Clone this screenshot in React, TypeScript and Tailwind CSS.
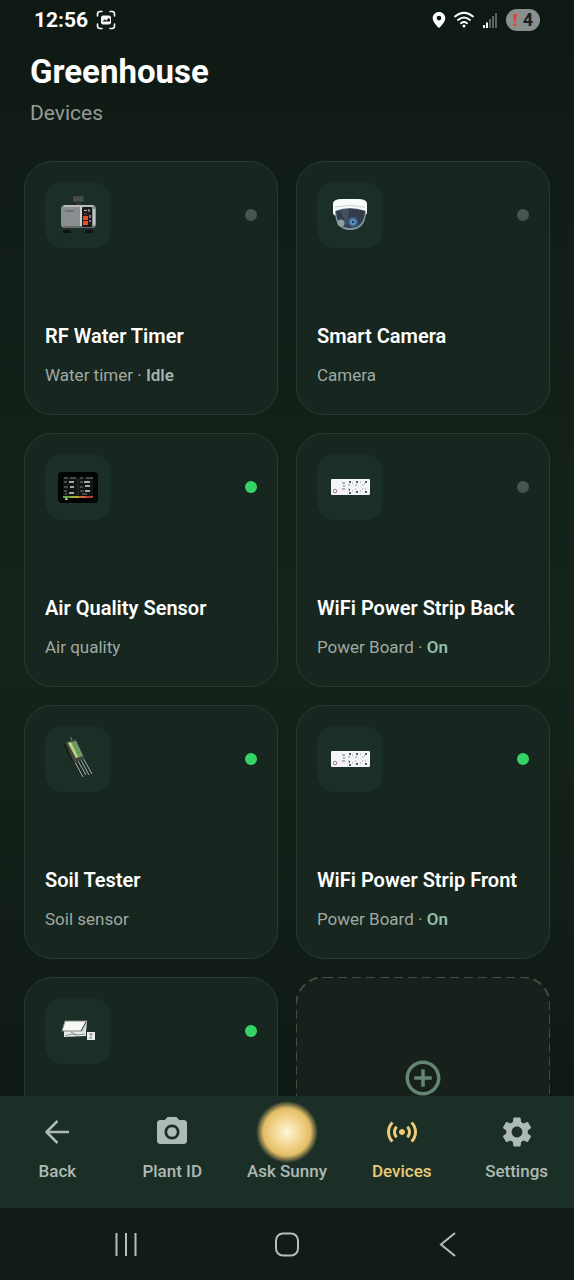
import { FC, ReactNode } from 'react';
import { MdAddCircleOutline, MdCameraAlt, MdSensors, MdSettings } from 'react-icons/md';

interface Device {
  id: string;
  name?: string;
  kind?: string;
  state?: 'Idle' | 'On';
  online: boolean;
  picture: ReactNode;
}

const WaterTimer = () => (
  <svg width="44" height="44" viewBox="0 0 44 44" aria-hidden="true">
    <rect x="17" y="3" width="11" height="6" rx="1" fill="#3f4343" />
    <path d="M19 4v4M22 4v4M25 4v4" stroke="#5b605f" strokeWidth="1" />
    <rect x="20" y="8" width="5" height="5" fill="#2f3434" />
    <rect x="8" y="34" width="6" height="5" fill="#252929" />
    <rect x="7" y="37" width="8" height="3" rx="1" fill="#0d1010" />
    <rect x="30" y="34" width="6" height="5" fill="#252929" />
    <rect x="29" y="37" width="8" height="3" rx="1" fill="#0d1010" />
    <rect x="5" y="12" width="35" height="23" rx="4" fill="#898e91" />
    <path d="M8 13h29" stroke="#b9bdbd" strokeWidth="2" />
    <path d="M7 34h31" stroke="#656a6c" strokeWidth="2" />
    <path d="M9 18h9" stroke="#6d7275" strokeWidth="2" />
    <rect x="24" y="14" width="3" height="19" fill="#cfd1d1" />
    <rect x="26" y="14" width="10" height="20" rx="1" fill="#17191b" />
    <path d="M28 17l1 1 2-1M33 16v3" stroke="#d6d6d6" strokeWidth="1" fill="none" />
    <rect x="27" y="23" width="5" height="4" fill="#f04a21" />
    <rect x="27" y="28" width="5" height="4" fill="#f04a21" />
    <path d="M28 21h3" stroke="#b3432a" strokeWidth="1" />
    <path d="M34 22v3M34 27v2" stroke="#ddd" strokeWidth="1" />
    <path d="M38 16v16" stroke="#bec2c3" strokeWidth="2" />
  </svg>
);

const DomeCamera = () => (
  <svg width="44" height="44" viewBox="0 0 44 44" aria-hidden="true">
    <path d="M5 10Q6 6 14 6H30Q38 6 39 10V20Q38 23 36 23H8Q5 22 5 20Z" fill="#fafcfc" />
    <path d="M7 14Q22 11 37 14" stroke="#c8d0d3" strokeWidth="1" fill="none" />
    <path d="M7 18Q22 12 38 18Q38 37 22 37Q7 37 7 18Z" fill="#8295aa" />
    <path d="M8 18Q22 13 37 18Q36 35 22 35Q9 35 8 18Z" fill="#333d49" />
    <path d="M12 17Q16 15 21 16L19 33Q15 31 16 26Z" fill="#445060" />
    <circle cx="13" cy="30" r="3.5" fill="#8f9da7" />
    <circle cx="25" cy="29" r="5" fill="#3d638b" />
    <circle cx="25" cy="29" r="3" fill="#6096c6" />
    <circle cx="25" cy="29" r="1.3" fill="#1e3a5c" />
  </svg>
);

const AirMonitor = () => (
  <svg width="44" height="44" viewBox="0 0 44 44" aria-hidden="true">
    <rect x="2" y="7" width="40" height="31" rx="4" fill="#020303" />
    <rect x="7" y="12" width="30" height="21" fill="#111414" />
    <path
      d="M8 13h4M14 13h6M24 13h3M30 13h7M8 17h3M24 17h3M8 22h4M24 22h3M8 26h3M24 26h4M9 29h2M26 29h5"
      stroke="#7a8080"
      strokeWidth="1"
    />
    <path d="M13 17h5M28 17h6M14 22h4M29 21h5M13 28h5M29 26h5" stroke="#d3d7d6" strokeWidth="1.5" />
    <path d="M22 14v16" stroke="#303536" strokeWidth="1" />
    <path d="M7 32h8" stroke="#65a53f" strokeWidth="2" />
    <path d="M15 32h8" stroke="#b3ab36" strokeWidth="2" />
    <path d="M23 32h7" stroke="#cf6b32" strokeWidth="2" />
    <path d="M30 32h7" stroke="#b83835" strokeWidth="2" />
    <path d="M10 32l2 3h-3z" fill="#d6e3a0" />
  </svg>
);

const PowerStrip = () => (
  <svg width="44" height="44" viewBox="0 0 44 44" aria-hidden="true">
    <rect x="3" y="14" width="39" height="16" rx="1" fill="#f2f4f7" />
    <circle cx="7" cy="26" r="1.8" fill="none" stroke="#a97a80" strokeWidth="1" />
    <path d="M14 18h3M15 21h2M14 24h3" stroke="#73787c" strokeWidth="1" />
    <path
      d="M20 20h2M24 18h1M27 20h2M32 17h1M34 20h1M36 19h1M20 24h1M24 26h1M27 24h1M32 26h1M34 24h1M37 24h1"
      stroke="#8b9195"
      strokeWidth="1"
    />
    <path d="M21 17h2M28 17h2M37 17h2M21 25h1M21 28h2M28 27h2M37 27h2" stroke="#25292c" strokeWidth="1.5" />
  </svg>
);

const SoilProbe = () => (
  <svg width="44" height="44" viewBox="0 0 44 44" aria-hidden="true">
    <path d="M19 25l8 15M22 24l8 14M25 23l8 15M27 21l9 16" stroke="#aaafaa" strokeWidth="1" />
    <path d="M15 0l1 4" stroke="#777c72" strokeWidth="1" />
    <path d="M9 5L20 2L29 22L18 26Z" fill="#41473f" />
    <path d="M9 5L18 26L16 25L8 9Z" fill="#191e1a" />
    <path d="M12 6L20 4L27 19L20 21Z" fill="#7b9960" />
    <path d="M12 6L15 5L22 20L20 21Z" fill="#bfd080" />
    <path d="M17 7h2M18 10l3-1M20 13l2-1M21 16l3-1" stroke="#4ba266" strokeWidth="2" />
  </svg>
);

const Sender = () => (
  <svg width="44" height="44" viewBox="0 0 44 44" aria-hidden="true">
    <path d="M8 20H30V27L8 28Z" fill="#e5e8e4" />
    <path d="M9 12H31L26 22H6Z" fill="#f7f8f4" stroke="#7d8580" strokeWidth="1" />
    <path d="M31 12L26 22L30 24Z" fill="#d7dcd8" />
    <path d="M30 13L25 22" stroke="#39413c" strokeWidth="1" />
    <path d="M9 27l7-2 5 1M15 23l5 3 9-1" stroke="#8c938e" strokeWidth="1" fill="none" />
    <rect x="31" y="23" width="8" height="8" fill="#e9ece8" />
    <path d="M33 25h4M35 25v4M33 29h3" stroke="#89918c" strokeWidth="1" />
  </svg>
);

const BackArrow = () => (
  <svg width="36" height="36" viewBox="0 0 36 36" fill="none" stroke="currentColor" strokeWidth="2.5" aria-hidden="true">
    <path d="M30 18H7M18.500 7L7.500 18L18.500 29" strokeLinejoin="round" />
  </svg>
);

const devices: Device[] = [
  { id: 'timer', name: 'RF Water Timer', kind: 'Water timer', state: 'Idle', online: false, picture: <WaterTimer /> },
  { id: 'camera', name: 'Smart Camera', kind: 'Camera', online: false, picture: <DomeCamera /> },
  { id: 'air', name: 'Air Quality Sensor', kind: 'Air quality', online: true, picture: <AirMonitor /> },
  { id: 'strip-back', name: 'WiFi Power Strip Back', kind: 'Power Board', state: 'On', online: false, picture: <PowerStrip /> },
  { id: 'soil', name: 'Soil Tester', kind: 'Soil sensor', online: true, picture: <SoilProbe /> },
  { id: 'strip-front', name: 'WiFi Power Strip Front', kind: 'Power Board', state: 'On', online: true, picture: <PowerStrip /> },
  { id: 'sender', online: true, picture: <Sender /> },
];

const getStateColor = (state: string) => {
  switch (state) {
    case 'On':
      return 'text-[#94bdab]';
    default:
      return 'text-[#a9b2ad]';
  }
};

const StatusBar: FC = () => (
  <div className="flex h-10 shrink-0 items-center justify-between px-[34px]">
    <div className="flex items-center gap-2">
      <span className="text-[21px] leading-6 font-bold text-white">12:56</span>
      <svg width="20" height="20" viewBox="0 0 20 20" fill="none" aria-hidden="true">
        <path
          d="M1.5 6V4Q1.5 1.5 4 1.5H6M14 1.5H16Q18.5 1.5 18.5 4V6M18.5 14V16Q18.5 18.5 16 18.5H14M6 18.5H4Q1.5 18.5 1.5 16V14"
          stroke="#f3f6f4"
          strokeWidth="1.6"
          strokeLinecap="round"
        />
        <rect x="5" y="5.5" width="10" height="9" rx="2" fill="#f3f6f4" />
        <path d="M6.500 11.500l2-2 2 1 2-2.500 1.500 1v2.500z" fill="#101b15" />
      </svg>
    </div>
    <div className="flex items-center gap-2">
      <svg width="14" height="18" viewBox="0 0 14 18" aria-hidden="true">
        <path
          d="M7 1C3.5 1 .7 3.7.7 7.2C.7 11 5 15 7 17C9 15 13.3 11 13.3 7.2C13.3 3.7 10.5 1 7 1ZM7 4.8A2.3 2.3 0 1 1 7 9.4A2.3 2.3 0 0 1 7 4.8Z"
          fill="#fff"
        />
      </svg>
      <svg width="20" height="18" viewBox="0 0 20 18" fill="none" stroke="#fff" strokeWidth="1.8" strokeLinecap="round" aria-hidden="true">
        <path d="M1 5.500Q10-2 19 5.500M4 9Q10 4 16 9M7 12.200Q10 9.800 13 12.200" />
        <circle cx="10" cy="15" r=".6" fill="#fff" />
      </svg>
      <svg width="16" height="18" viewBox="0 0 16 18" strokeWidth="2" aria-hidden="true">
        <path d="M2 14v3M5 11.500v5.500" stroke="#f3f6f4" />
        <path d="M8 8v9M11 5v12M14 2v15" stroke="#5b645f" />
      </svg>
      <div className="flex h-[22px] w-[34px] items-center justify-center gap-1.5 rounded-full bg-[#8a908d]">
        <svg width="4" height="12" viewBox="0 0 4 12" aria-hidden="true">
          <path d="M0 0h4l-1 8H1zM.5 9.5h3V12h-3z" fill="#e5413f" />
        </svg>
        <span className="text-[18px] leading-5 font-bold text-[#18211c]">4</span>
      </div>
    </div>
  </div>
);

const DeviceCard: FC<{ device: Device }> = ({ device }) => (
  <button
    type="button"
    aria-label={device.name ?? 'Device'}
    className="flex aspect-square flex-col justify-between rounded-[28px] border border-[#2b3b33] bg-[#17261e] px-5 pt-5 pb-[27px] text-left"
  >
    <span className="flex w-full items-center justify-between">
      <span className="flex h-[66px] w-[66px] items-center justify-center rounded-[18px] bg-[#1b2f27]">
        {device.picture}
      </span>
      <span className={`h-3 w-3 rounded-full ${device.online ? 'bg-[#36d467]' : 'bg-[#4a544e]'}`} />
    </span>
    {device.name && (
      <span className="flex flex-col gap-[13px]">
        <span className="text-[20px] leading-7 font-semibold whitespace-nowrap text-white">{device.name}</span>
        <span className="text-[17px] leading-6 text-[#a0aaa4]">
          {device.kind}
          {device.state && (
            <>
              {' · '}
              <span className={`font-semibold ${getStateColor(device.state)}`}>{device.state}</span>
            </>
          )}
        </span>
      </span>
    )}
  </button>
);

const AddCard: FC = () => (
  <button
    type="button"
    aria-label="Add device"
    className="relative flex aspect-square items-start justify-center rounded-[28px] bg-[#15211a] pt-20"
  >
    {/* the svg clips the outer half of the stroke, which leaves a 1px dash */}
    <svg className="absolute inset-0 h-full w-full" aria-hidden="true">
      <rect width="100%" height="100%" rx="28" fill="none" stroke="#3f4d45" strokeWidth="2" strokeDasharray="9 5" />
    </svg>
    <MdAddCircleOutline size={42} className="text-[#648476]" />
  </button>
);

const tabs = [
  { label: 'Back', icon: <BackArrow /> },
  { label: 'Plant ID', icon: <MdCameraAlt size={36} /> },
  {
    label: 'Ask Sunny',
    icon: (
      <span className="h-[62px] w-[62px] shrink-0 rounded-full bg-[radial-gradient(circle_closest-side,#fff6dc_0%,#f3d58f_45%,#e5bd68_76%,#e5bd6800_100%)]" />
    ),
  },
  { label: 'Devices', icon: <MdSensors size={36} />, active: true },
  { label: 'Settings', icon: <MdSettings size={36} /> },
];

const TabBar: FC = () => (
  <nav className="grid h-28 shrink-0 grid-cols-5 bg-[#1c2f27] pt-[18px]">
    {tabs.map((tab) => (
      <a
        key={tab.label}
        href="#"
        className={`flex flex-col items-center gap-[9px] ${tab.active ? 'text-[#ebcb76]' : 'text-[#aebab4]'}`}
      >
        <span className="flex h-9 items-center justify-center">{tab.icon}</span>
        <span className="text-[17px] leading-6 font-medium whitespace-nowrap">{tab.label}</span>
      </a>
    ))}
  </nav>
);

const SystemBar: FC = () => (
  <div className="flex h-[72px] shrink-0 items-center justify-between bg-[#111c16] px-28">
    <button type="button" aria-label="Recent apps">
      <svg width="28" height="28" viewBox="0 0 28 28" stroke="#b5bfb9" strokeWidth="2" aria-hidden="true">
        <path d="M4.5 3v23M14 3v23M23.5 3v23" />
      </svg>
    </button>
    <button type="button" aria-label="Home">
      <svg width="28" height="28" viewBox="0 0 28 28" fill="none" stroke="#b5bfb9" strokeWidth="2" aria-hidden="true">
        <rect x="3" y="3.5" width="22" height="22" rx="7" />
      </svg>
    </button>
    <button type="button" aria-label="Go back">
      <svg width="28" height="28" viewBox="0 0 28 28" fill="none" stroke="#b5bfb9" strokeWidth="2" aria-hidden="true">
        <path d="M21 3L7 14.5L21 26" />
      </svg>
    </button>
  </div>
);

export default function App() {
  return (
    <div className="flex h-screen flex-col overflow-hidden bg-linear-to-b from-[#0f1914] via-[#14241b] to-[#0d1511] font-['Roboto',sans-serif]">
      <StatusBar />
      <header className="flex shrink-0 flex-col gap-[9px] px-[30px] pt-3 pb-9">
        <h1 className="text-[33px] leading-10 font-bold text-white">Greenhouse</h1>
        <p className="text-[21px] leading-6 text-[#939c97]">Devices</p>
      </header>
      <main className="min-h-0 flex-1 overflow-hidden px-6">
        <div className="grid grid-cols-2 gap-[18px]">
          {devices.map((device) => (
            <DeviceCard key={device.id} device={device} />
          ))}
          <AddCard />
        </div>
      </main>
      <TabBar />
      <SystemBar />
    </div>
  );
}
